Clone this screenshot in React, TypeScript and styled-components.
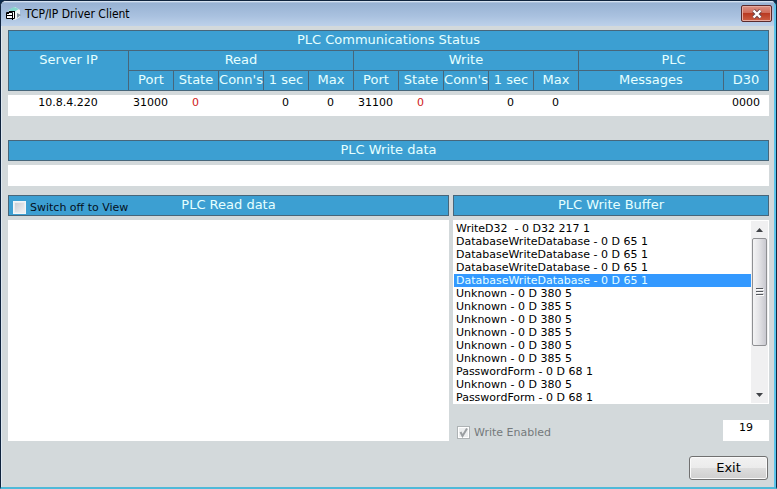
import React from "react";
import styled, { createGlobalStyle, css } from "styled-components";

const GlobalStyle = createGlobalStyle`
  *, *::before, *::after { box-sizing: border-box; }
  body { margin: 0; background: #0b2a4a; }
  button, input { font: inherit; margin: 0; }
`;

const blue = "#3c9fd2";
const line = "#47667a";
const face = "#d3d9db";

const Window = styled.main`
  display: flex;
  flex-direction: column;
  min-height: 100vh;
  background: ${face};
  border: 1px solid #10243e;
  border-bottom: 2px solid #4fb9d8;
  border-radius: 6px 6px 0 0;
  box-shadow: inset -2px 0 0 #5cc4ea, inset 1px 0 0 #dfe9f2;
  font-family: "DejaVu Sans", Verdana, sans-serif;
  font-size: 11px;
  color: #000;
  overflow: hidden;
`;

const TitleBar = styled.header`
  display: flex;
  align-items: center;
  gap: 4px;
  height: 25px;
  margin-right: 2px;
  padding: 0 2px 0 4px;
  background: linear-gradient(#eaf2fb 0, #98b2d3 2px, #a9c1df 60%, #bdd1ea);
`;

const Title = styled.h1`
  flex: 1;
  margin: 0;
  font: 400 12px/16px "DejaVu Sans Condensed", "DejaVu Sans", Tahoma, sans-serif;
`;

const CloseButton = styled.button`
  display: grid;
  place-items: center;
  width: 31px;
  height: 17px;
  padding: 0;
  border: 1px solid #5b2a2c;
  border-radius: 2px;
  box-shadow: inset 0 0 0 1px #e7aba0;
  background: linear-gradient(#dc9184 0, #cf6a57 48%, #b93a22 50%, #cd5f44);
`;

const Content = styled.div`
  display: flex;
  flex-direction: column;
  gap: 9px;
  padding: 4px 7px 7px 7px;
`;

const StatusTable = styled.table`
  width: 100%;
  table-layout: fixed;
  border-collapse: separate;
  border-spacing: 0;
  margin-bottom: 15px;
`;

const Col = styled.col<{ $width?: number }>`
  width: ${(p) => (p.$width ? `${p.$width}px` : "auto")};
`;

const HeadCell = styled.th<{ $closed?: boolean }>`
  height: ${(p) => (p.$closed ? 21 : 20)}px;
  padding: 0;
  vertical-align: top;
  border: 0 solid ${line};
  border-width: 1px 0 ${(p) => (p.$closed ? 1 : 0)}px 1px;
  background: ${blue};
  color: #e6ffff;
  font-size: 13px;
  font-weight: 400;
  line-height: 17px;
  white-space: nowrap;
  &:last-child { border-right-width: 1px; }
`;

const DataCell = styled.td<{ $alert?: boolean }>`
  height: 25px;
  padding: 0;
  border-top: 4px solid ${face};
  background: #fff;
  color: ${(p) => (p.$alert ? "#d02020" : "#000")};
  line-height: 15px;
  text-align: center;
  vertical-align: top;
`;

const Section = styled.section`
  display: flex;
  flex-direction: column;
  gap: 4px;
  min-width: 0;
`;

const Band = styled.div`
  display: grid;
  grid-template-columns: 1fr auto 1fr;
  height: 21px;
  border: 1px solid ${line};
  background: ${blue};
`;

const BandTitle = styled.h2`
  grid-column: 2;
  grid-row: 1;
  margin: 0;
  color: #e6ffff;
  font-size: 13px;
  font-weight: 400;
  line-height: 17px;
`;

const Field = styled.output<{ $width?: string }>`
  display: block;
  width: ${(p) => p.$width ?? "100%"};
  height: 21px;
  background: #fff;
  line-height: 15px;
  text-align: center;
`;

const Columns = styled.div`
  display: grid;
  grid-template-columns: minmax(0, 1fr) 316px;
  gap: 4px;
`;

const ReadView = styled.div`
  flex: 1;
  background: #fff;
`;

const CheckLabel = styled.label<{ $muted?: boolean }>`
  display: flex;
  align-items: center;
  gap: 4px;
  padding: 3px 0 0 4px;
  color: ${(p) => (p.$muted ? "#75797b" : "#04101c")};
`;

const Check = styled.input`
  appearance: none;
  width: 13px;
  height: 13px;
  border: 1px solid #f2f6f8;
  background: linear-gradient(135deg, #c6cbd2, #f4f5f6);
  box-shadow: inset 0 0 0 1px #e9edf0;
  &:disabled {
    border-color: #aeb3b5;
    box-shadow: inset 0 0 0 1px #fff;
    background: #eceeef;
  }
`;

const CheckBox = styled.span`
  display: grid;
  > * { grid-area: 1 / 1; }
  > svg { visibility: hidden; pointer-events: none; }
  > input:checked + svg { visibility: visible; z-index: 1; }
`;

const Buffer = styled.div`
  display: grid;
  grid-template-columns: minmax(0, 1fr) 17px;
  height: 184px;
  padding: 1px;
  background: #fff;
`;

const Items = styled.ul`
  margin: 0;
  padding: 1px 0 0;
  list-style: none;
  overflow: hidden;
`;

const Item = styled.li<{ $selected?: boolean }>`
  height: 13px;
  padding-left: 2px;
  line-height: 13px;
  white-space: pre;
  ${(p) =>
    p.$selected &&
    css`
      background: #3399ff;
      color: #e6ffff;
    `}
`;

const ScrollBar = styled.div`
  display: grid;
  grid-template-rows: 17px 108px 1fr 17px;
  padding: 0 1px;
  background: #f0f0f1;
`;

const ScrollButton = styled.button`
  display: grid;
  place-items: center;
  padding: 0;
  border: 0;
  background: transparent;
  &:last-child { grid-row: 4; }
`;

const Thumb = styled.div`
  display: grid;
  place-items: center;
  border: 1px solid #8f9093;
  border-radius: 2px;
  background: linear-gradient(90deg, #f4f4f5, #e4e4e7 45%, #c8c8cf);
`;

const BufferFooter = styled.div`
  display: flex;
  justify-content: space-between;
  margin-top: 12px;
`;

const Actions = styled.footer`
  display: flex;
  justify-content: flex-end;
  padding: 6px 1px 0 0;
`;

const ExitButton = styled.button`
  width: 79px;
  height: 24px;
  padding: 0;
  border: 1px solid #707070;
  border-radius: 3px;
  box-shadow: inset 0 0 0 1px #fafafa;
  background: linear-gradient(#f2f2f2 0, #ebebeb 50%, #dddddd 50%, #cfcfcf);
  color: #000;
  font-size: 13px;
  line-height: 20px;
`;

const FormIcon = () => (
  <svg width="16" height="16" viewBox="0 0 16 16" aria-hidden="true">
    <path d="M4 4l6-3 5 3v7l-5 3-6-2z" fill="#f0f6f4" />
    <path d="M3 4l6-3 5 2-5 3z" fill="#86d8cc" />
    <path d="M12 7l4 2-4 3z" fill="#8494a0" />
    <path d="M4.500 5.500h5v7h-5z" fill="#fff" stroke="#000" />
    <path d="M1.500 6.500h6v6h-6z" fill="#fff" stroke="#000" />
    <path d="M1 7.500h3M4 5.500h6M2 9.500h5" stroke="#000" />
    <path d="M7.500 9v5" stroke="#000" />
  </svg>
);

const CloseIcon = () => (
  <svg width="12" height="10" viewBox="0 0 12 10" aria-hidden="true">
    <path d="M2.500 1.500l7 7M9.500 1.500l-7 7" stroke="#6a4448" strokeWidth="4" />
    <path d="M2.500 1.500l7 7M9.500 1.500l-7 7" stroke="#fff" strokeWidth="2.400" />
  </svg>
);

const Arrow = ({ down }: { down?: boolean }) => (
  <svg width="7" height="4" viewBox="0 0 7 4" aria-hidden="true">
    <path d={down ? "M0 0h7L3.500 4z" : "M0 4h7L3.500 0z"} fill="#404347" />
  </svg>
);

const Grip = () => (
  <svg width="8" height="8" viewBox="0 0 8 8" aria-hidden="true">
    <path d="M0 .5h7M0 3.500h7M0 6.500h7" stroke="#55585d" />
    <path d="M1 1.500h7M1 4.500h7M1 7.500h7" stroke="#fff" />
  </svg>
);

const Tick = () => (
  <svg width="13" height="13" viewBox="0 0 13 13" aria-hidden="true">
    <path d="M3.500 6l2 4L10 2.500" fill="none" stroke="#9a9ea1" strokeWidth="2" />
  </svg>
);

const widths = [120, ...Array(10).fill(45), undefined, 46];
const subHeads = [
  "Port", "State", "Conn's", "1 sec", "Max",
  "Port", "State", "Conn's", "1 sec", "Max",
  "Messages", "D30",
];
const values = ["10.8.4.220", "31000", "0", "", "0", "0", "31100", "0", "", "0", "0", "", "0000"];
const alertColumns = [2, 7];

const database = "DatabaseWriteDatabase - 0 D 65 1";
const buffer = [
  "WriteD32  - 0 D32 217 1",
  database, database, database, database,
  "Unknown - 0 D 380 5",
  "Unknown - 0 D 385 5",
  "Unknown - 0 D 380 5",
  "Unknown - 0 D 385 5",
  "Unknown - 0 D 380 5",
  "Unknown - 0 D 385 5",
  "PasswordForm - 0 D 68 1",
  "Unknown - 0 D 380 5",
  "PasswordForm - 0 D 68 1",
];
const selectedIndex = 4;

export default function App() {
  return (
    <>
      <GlobalStyle />
      <Window>
        <TitleBar>
          <FormIcon />
          <Title>TCP/IP Driver Client</Title>
          <CloseButton type="button" aria-label="Close">
            <CloseIcon />
          </CloseButton>
        </TitleBar>
        <Content>
          <StatusTable>
            <colgroup>
              {widths.map((w, i) => <Col key={i} $width={w} />)}
            </colgroup>
            <thead>
              <tr><HeadCell colSpan={13}>PLC Communications Status</HeadCell></tr>
              <tr>
                <HeadCell rowSpan={2} $closed>Server IP</HeadCell>
                <HeadCell colSpan={5}>Read</HeadCell>
                <HeadCell colSpan={5}>Write</HeadCell>
                <HeadCell colSpan={2}>PLC</HeadCell>
              </tr>
              <tr>
                {subHeads.map((h, i) => <HeadCell key={i} $closed>{h}</HeadCell>)}
              </tr>
            </thead>
            <tbody>
              <tr>
                {values.map((v, i) => (
                  <DataCell key={i} $alert={alertColumns.includes(i)}>{v}</DataCell>
                ))}
              </tr>
            </tbody>
          </StatusTable>

          <Section>
            <Band><BandTitle>PLC Write data</BandTitle></Band>
            <Field aria-label="PLC Write data" />
          </Section>

          <Columns>
            <Section>
              <Band>
                <CheckLabel>
                  <Check type="checkbox" />
                  Switch off to View
                </CheckLabel>
                <BandTitle>PLC Read data</BandTitle>
              </Band>
              <ReadView />
            </Section>
            <Section>
              <Band><BandTitle>PLC Write Buffer</BandTitle></Band>
              <Buffer>
                <Items role="listbox" aria-label="PLC Write Buffer">
                  {buffer.map((text, i) => (
                    <Item key={i} role="option" aria-selected={i === selectedIndex} $selected={i === selectedIndex}>
                      {text}
                    </Item>
                  ))}
                </Items>
                <ScrollBar>
                  <ScrollButton type="button" aria-label="Scroll up"><Arrow /></ScrollButton>
                  <Thumb><Grip /></Thumb>
                  <ScrollButton type="button" aria-label="Scroll down"><Arrow down /></ScrollButton>
                </ScrollBar>
              </Buffer>
              <BufferFooter>
                <CheckLabel $muted>
                  <CheckBox>
                    <Check type="checkbox" defaultChecked disabled />
                    <Tick />
                  </CheckBox>
                  Write Enabled
                </CheckLabel>
                <Field $width="46px">19</Field>
              </BufferFooter>
            </Section>
          </Columns>

          <Actions>
            <ExitButton type="button">Exit</ExitButton>
          </Actions>
        </Content>
      </Window>
    </>
  );
}
